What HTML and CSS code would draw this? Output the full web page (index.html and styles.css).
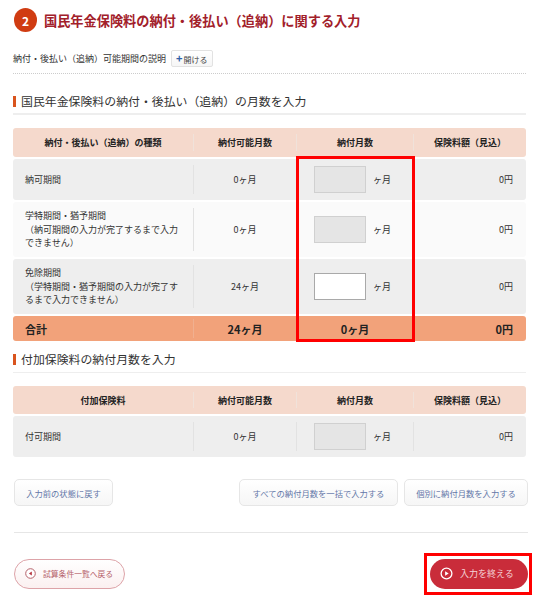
FILE: index.html
```html
<!DOCTYPE html>
<html lang="ja">
<head>
    <meta charset="UTF-8">
    <meta name="viewport" content="width=device-width, initial-scale=1.0">
    <title>国民年金保険料の納付・後払い（追納）に関する入力</title>
    <link rel="stylesheet" href="styles.css">
</head>
<body>
    <div class="page">
        <h1 class="step-title"><span class="step-num">2</span>国民年金保険料の納付・後払い（追納）に関する入力</h1>
        <div class="explain">
            <span>納付・後払い（追納）可能期間の説明</span>
            <button class="open-btn"><span class="plus">+</span>開ける</button>
        </div>

        <h2 class="sub-title">国民年金保険料の納付・後払い（追納）の月数を入力</h2>
        <div class="calc">
            <div class="row head">
                <div class="cell center">納付・後払い（追納）の種類</div>
                <div class="cell center">納付可能月数</div>
                <div class="cell center">納付月数</div>
                <div class="cell center">保険料額（見込）</div>
            </div>
            <div class="row body-row row-1">
                <div class="cell label">納可期間</div>
                <div class="cell center">0ヶ月</div>
                <div class="cell month"><input type="text" disabled><span>ヶ月</span></div>
                <div class="cell right">0円</div>
            </div>
            <div class="row body-row row-3 alt">
                <div class="cell label"><p>学特期間・猶予期間<br>（納可期間の入力が完了するまで入力できません）</p></div>
                <div class="cell center">0ヶ月</div>
                <div class="cell month"><input type="text" disabled><span>ヶ月</span></div>
                <div class="cell right">0円</div>
            </div>
            <div class="row body-row row-3">
                <div class="cell label"><p>免除期間<br>（学特期間・猶予期間の入力が完了するまで入力できません）</p></div>
                <div class="cell center">24ヶ月</div>
                <div class="cell month"><input type="text"><span>ヶ月</span></div>
                <div class="cell right">0円</div>
            </div>
            <div class="row total">
                <div class="cell label">合計</div>
                <div class="cell center">24ヶ月</div>
                <div class="cell center">0ヶ月</div>
                <div class="cell right">0円</div>
            </div>
            <div class="highlight"></div>
        </div>

        <h2 class="sub-title second">付加保険料の納付月数を入力</h2>
        <div class="calc">
            <div class="row head">
                <div class="cell center">付加保険料</div>
                <div class="cell center">納付可能月数</div>
                <div class="cell center">納付月数</div>
                <div class="cell center">保険料額（見込）</div>
            </div>
            <div class="row body-row row-1">
                <div class="cell label">付可期間</div>
                <div class="cell center">0ヶ月</div>
                <div class="cell month"><input type="text" disabled><span>ヶ月</span></div>
                <div class="cell right">0円</div>
            </div>
        </div>

        <div class="actions">
            <button class="btn btn-reset">入力前の状態に戻す</button>
            <button class="btn btn-all">すべての納付月数を一括で入力する</button>
            <button class="btn btn-each">個別に納付月数を入力する</button>
        </div>

        <div class="footer">
            <button class="btn-back">
                <svg width="11" height="11" viewBox="0 0 11 11"><circle cx="5.5" cy="5.5" r="4.8" fill="#fff" stroke="#b5616a" stroke-width="1"/><path d="M6.8 3.6v3.8L3.9 5.5z" fill="#b5303c"/></svg>
                試算条件一覧へ戻る
            </button>
            <button class="btn-finish">
                <svg width="13" height="13" viewBox="0 0 13 13"><circle cx="6.5" cy="6.5" r="5.4" fill="none" stroke="#fff" stroke-width="1.3"/><path d="M5.1 4.2v4.6l3.6-2.3z" fill="#fff"/></svg>
                入力を終える
            </button>
        </div>
    </div>
</body>
</html>
```

FILE: styles.css
```css
* {
    box-sizing: border-box;
}
body {
    margin: 0;
    background-color: #fff;
    color: #333;
    font-family: "Noto Sans CJK JP", "Noto Sans", sans-serif;
    font-size: 9px;
}
button {
    font-family: inherit;
    cursor: pointer;
}
.page {
    width: 535px;
    height: 603px;
    padding: 8px 9px 0 13px;
    overflow: hidden;
}
.step-title {
    display: flex;
    align-items: center;
    gap: 7px;
    height: 24px;
    margin: 0 0 0 1px;
    color: #a2202a;
    font-size: 13.2px;
    font-weight: 700;
}
.step-num {
    display: flex;
    align-items: center;
    justify-content: center;
    width: 23px;
    height: 24px;
    border-radius: 50%;
    background-color: #d03c12;
    color: #fff;
    font-size: 12px;
}
.explain {
    display: flex;
    align-items: center;
    gap: 5px;
    height: 42px;
    padding: 18px 0 6px;
    border-bottom: 1px dotted #ccc;
}
.open-btn {
    height: 17px;
    padding: 0 4px;
    border: 1px solid #e2e2e2;
    border-radius: 2px;
    background: linear-gradient(#fff, #f6f6f6);
    color: #444;
    font-size: 8px;
}
.plus {
    margin-right: 1px;
    color: #2f5fa8;
    font-size: 11px;
    font-weight: 700;
    line-height: 1;
}
.sub-title {
    position: relative;
    height: 21px;
    margin: 20px 0 13px;
    padding-left: 8px;
    border-bottom: 2px solid #eee;
    color: #333;
    font-size: 11.9px;
    font-weight: 400;
    line-height: 14px;
}
.sub-title::before {
    content: "";
    position: absolute;
    left: 0;
    top: 2px;
    width: 3px;
    height: 11px;
    background-color: #d9541e;
}
.sub-title.second {
    margin: 11px 0 13px;
    border-bottom-width: 1px;
}
.sub-title.second + .calc .head {
    height: 28px;
}
.calc {
    position: relative;
    display: flex;
    flex-direction: column;
    gap: 2px;
}
.row {
    display: grid;
    grid-template-columns: 180px 103px 117px 113px;
    padding: 6px 0;
    border-radius: 3px;
}
.cell {
    display: flex;
    align-items: center;
    border-left: 1px solid #e2e2e2;
}
.cell:first-child {
    border-left: none;
}
.center {
    justify-content: center;
}
.right {
    justify-content: flex-end;
    padding-right: 13px;
}
.label {
    padding: 0 10px 0 12px;
}
.label p {
    margin: 0;
    line-height: 13.5px;
}
.head {
    height: 29px;
    background-color: #f5d9cc;
    color: #222;
    font-weight: 700;
}
.head .cell {
    border-left-color: #f0e2da;
}
.body-row {
    background-color: #eee;
}
.body-row.alt {
    background-color: #fafafa;
}
.row-1 {
    height: 41px;
}
.row-3 {
    height: 55px;
}
.month {
    padding-left: 17px;
    gap: 7px;
}
.month input {
    width: 52px;
    height: 27px;
    border: 1px solid #a9a9a9;
    border-radius: 0;
    background-color: #fff;
}
.month input:disabled {
    border-color: #d0d0d0;
    background-color: #e5e5e5;
}
.total {
    height: 25px;
    padding: 3px 0;
    background-color: #f2a27a;
    color: #222;
    font-size: 11px;
    font-weight: 700;
}
.total .cell {
    border-left-color: #f0b090;
}
.total .cell:nth-child(4) {
    border-left: none;
}
.highlight {
    position: absolute;
    left: 283px;
    top: 28px;
    width: 119px;
    height: 186px;
    border: 3px solid #f00;
}
.actions {
    display: flex;
    margin: 22px -2px 0 1px;
}
.btn {
    height: 27px;
    padding: 0;
    border: 1px solid #e6e6e6;
    border-radius: 5px;
    background: linear-gradient(#fff, #f6f6f6);
    color: #6377a8;
    font-size: 8.3px;
}
.btn-reset {
    width: 99px;
    margin-right: auto;
}
.btn-all {
    width: 159px;
    margin-right: 6px;
}
.btn-each {
    width: 124px;
}
.footer {
    display: flex;
    align-items: center;
    justify-content: space-between;
    height: 57px;
    margin: 26px -2px 0 1px;
    padding-top: 25px;
    border-top: 1px solid #e6e6e6;
}
.btn-back,
.btn-finish {
    display: flex;
    align-items: center;
    height: 30px;
    border-radius: 15px;
}
.btn-back {
    gap: 7px;
    width: 111px;
    padding: 0 0 0 10px;
    border: 1px solid #dda3a8;
    background: linear-gradient(#fff, #fbf0f0);
    color: #b5616a;
    font-size: 7.8px;
}
.btn-finish {
    position: relative;
    gap: 7px;
    width: 98px;
    padding: 0 0 0 10px;
    border: none;
    background-color: #c92c3a;
    color: #f5d5d8;
    font-size: 9px;
}
.btn-finish::after {
    content: "";
    position: absolute;
    left: -6px;
    top: -6px;
    right: -4px;
    bottom: -6px;
    border: 3px solid #f00;
}
```
